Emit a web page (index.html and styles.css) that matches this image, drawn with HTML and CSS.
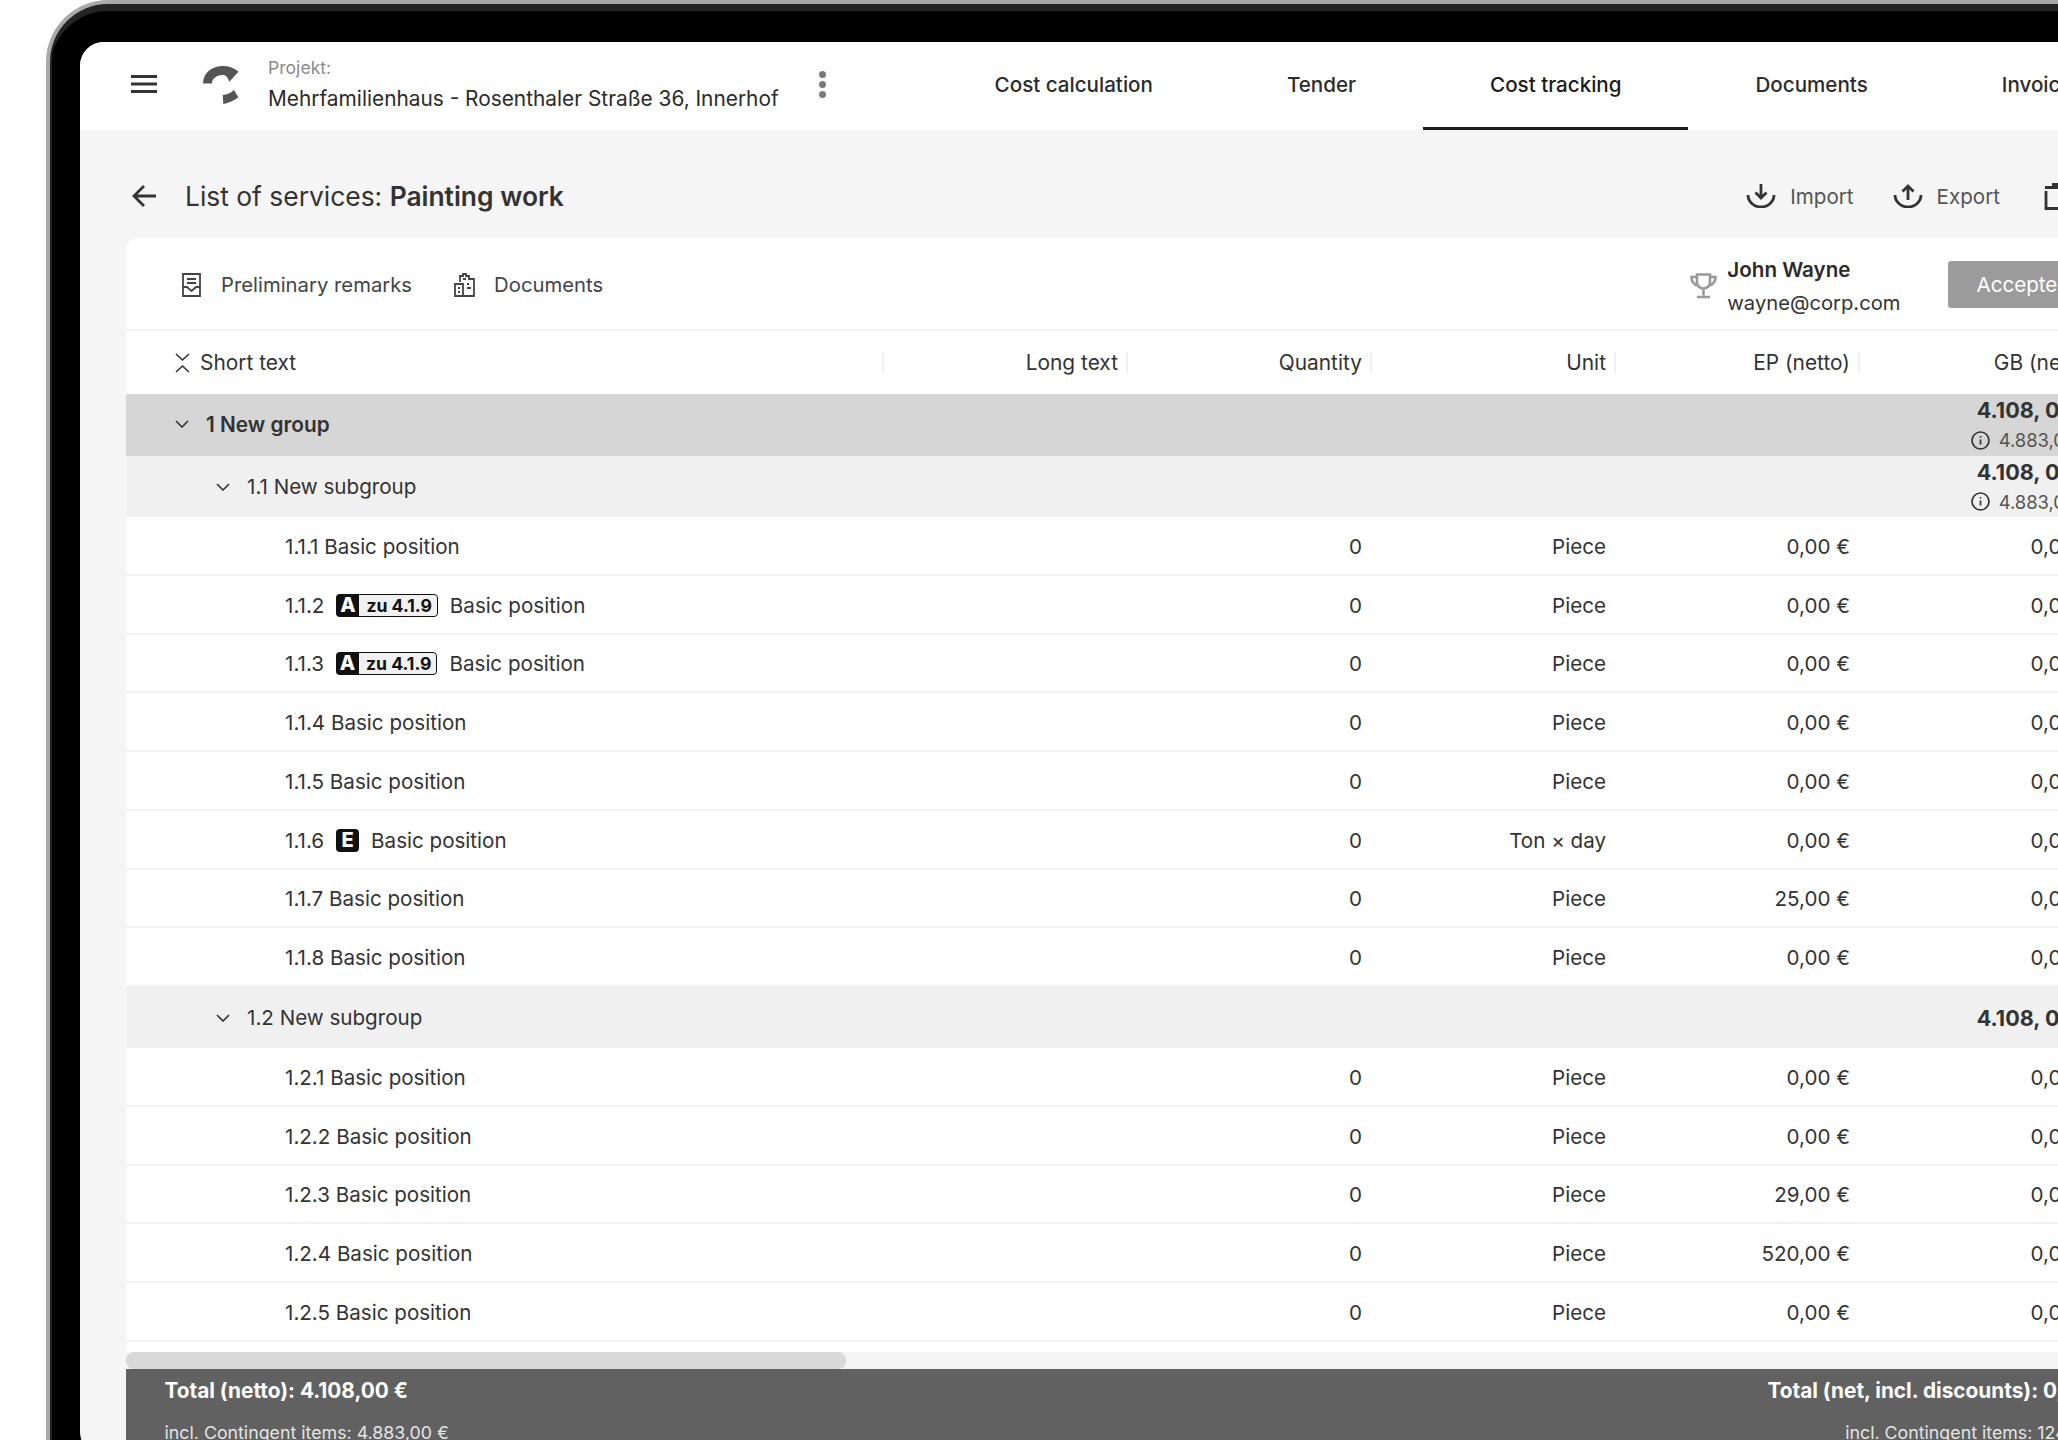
FILE: index.html
```html
<!DOCTYPE html>
<html lang="en">
<head>
    <meta charset="UTF-8">
    <meta name="viewport" content="width=device-width, initial-scale=1.0">
    <title>List of services</title>
    <link rel="stylesheet" href="styles.css">
</head>
<body>

<div class="device">
<div class="screen">

    <header class="topbar">
        <svg class="menu-icon" width="26" height="18" viewBox="0 0 26 18"><path d="M0 0h26v3H0zM0 7.500h26v3H0zM0 15h26v3H0z"/></svg>
        <svg class="logo" width="36" height="38" viewBox="0 0 36 38"><path d="M0 17.500C0 7 9 0 20 0c6 0 11.500 2 15.500 5.700L26.300 15.700C24.500 10.500 22.500 9 20 9c-6 0-11 3-11 8.500z"/><path d="M31 24l4.300 7.300C31 35 26 37 20.300 38l-.6-9c4.300-.5 8.300-2 11.300-5z"/></svg>
        <div class="project">
            <div class="project-label">Projekt:</div>
            <div class="project-name">Mehrfamilienhaus - Rosenthaler Straße 36, Innerhof</div>
        </div>
        <div class="kebab"><span></span><span></span><span></span></div>
        <nav class="tabs">
            <a class="tab">Cost calculation</a>
            <a class="tab">Tender</a>
            <a class="tab active">Cost tracking</a>
            <a class="tab">Documents</a>
            <a class="tab">Invoices</a>
        </nav>
    </header>

    <div class="toolbar">
        <svg class="back-icon" width="24" height="22" viewBox="0 0 24 22"><path d="M24 11H2M12 1L2 11l10 10"/></svg>
        <h1 class="page-title">List of services: <strong>Painting work</strong></h1>
        <div class="actions">
            <a class="action">
                <svg width="30" height="24" viewBox="0 0 30 24"><path d="M2 11a13 12 0 0 0 26 0M15 0v14M9.500 8.500L15 14l5.500-5.500"/></svg>
                Import
            </a>
            <a class="action">
                <svg width="30" height="24" viewBox="0 0 30 24"><path d="M2 11a13 12 0 0 0 26 0M15 16V2M9.500 7.500L15 2l5.500 5.500"/></svg>
                Export
            </a>
            <svg class="trash-icon" width="28" height="27" viewBox="0 0 28 27"><path d="M2 8v17.500h24V8M1 4.500h26M8 1.500h12"/></svg>
        </div>
    </div>

    <section class="card">
        <div class="subbar">
            <a class="sublink">
                <svg width="19" height="24" viewBox="0 0 19 24"><path d="M1 1h17v22H1zM5 6h9M5 10h9M1 14h4l4.500 4 4.500-4h4"/></svg>
                Preliminary remarks
            </a>
            <a class="sublink">
                <svg width="21" height="24" viewBox="0 0 21 24"><path d="M6 9V3h3V1h3v2h3v3h5v17H1V11h8v12M9 6h3M13 11h2M13 15h4M4 15h2M4 19h2"/></svg>
                Documents
            </a>
            <div class="winner">
                <svg class="trophy" width="27" height="26" viewBox="0 0 27 26"><path d="M7 1.500h13v8c0 3.500-3 6-6.500 6S7 13 7 9.500zM7 4H1.500c0 5 2 7.500 6.500 8.500M20 4h5.500c0 5-2 7.500-6.500 8.500M13.500 15.500v7M7 24h13"/></svg>
                <div>
                    <div class="winner-name">John Wayne</div>
                    <div class="winner-mail">wayne@corp.com</div>
                </div>
            </div>
            <button class="accepted">Accepted</button>
        </div>

        <div class="row head">
            <div class="cell cell-name sep">
                <svg class="collapse-icon" width="15" height="20" viewBox="0 0 15 20"><path d="M1 1l6.500 6L14 1M1 19l6.500-6 6.500 6"/></svg>
                Short text
            </div>
            <div class="cell num sep">Long text</div>
            <div class="cell num sep">Quantity</div>
            <div class="cell num sep">Unit</div>
            <div class="cell num sep">EP (netto)</div>
            <div class="cell num sep">GB (netto)</div>
        </div>

        <div class="row group">
            <div class="cell cell-name">
                <svg class="chevron" width="14" height="8" viewBox="0 0 14 8"><path d="M1 1l6 6 6-6"/></svg>
                <span class="group-label">1 New group</span>
            </div>
            <div class="cell"></div><div class="cell"></div><div class="cell"></div><div class="cell"></div>
            <div class="cell num amount">
                <div class="amount-main">4.108, 00 €</div>
                <div class="amount-sub">
                    <svg class="info-icon" width="19" height="19" viewBox="0 0 19 19"><circle cx="9.500" cy="9.500" r="8.500"/><path d="M9.500 8.500v5M9.500 5v1.500"/></svg>
                    4.883,00 €
                </div>
            </div>
        </div>

        <div class="row subgroup">
            <div class="cell cell-name">
                <svg class="chevron" width="14" height="8" viewBox="0 0 14 8"><path d="M1 1l6 6 6-6"/></svg>
                1.1 New subgroup
            </div>
            <div class="cell"></div><div class="cell"></div><div class="cell"></div><div class="cell"></div>
            <div class="cell num amount">
                <div class="amount-main">4.108, 00 €</div>
                <div class="amount-sub">
                    <svg class="info-icon" width="19" height="19" viewBox="0 0 19 19"><circle cx="9.500" cy="9.500" r="8.500"/><path d="M9.500 8.500v5M9.500 5v1.500"/></svg>
                    4.883,00 €
                </div>
            </div>
        </div>

        <div class="row item">
            <div class="cell cell-name">1.1.1 Basic position</div>
            <div class="cell"></div><div class="cell num">0</div><div class="cell num">Piece</div><div class="cell num">0,00 €</div><div class="cell num">0,00 €</div>
        </div>
        <div class="row item">
            <div class="cell cell-name">1.1.2 <span class="badge"><b class="badge-key">A</b><span class="badge-ref">zu 4.1.9</span></span> Basic position</div>
            <div class="cell"></div><div class="cell num">0</div><div class="cell num">Piece</div><div class="cell num">0,00 €</div><div class="cell num">0,00 €</div>
        </div>
        <div class="row item">
            <div class="cell cell-name">1.1.3 <span class="badge"><b class="badge-key">A</b><span class="badge-ref">zu 4.1.9</span></span> Basic position</div>
            <div class="cell"></div><div class="cell num">0</div><div class="cell num">Piece</div><div class="cell num">0,00 €</div><div class="cell num">0,00 €</div>
        </div>
        <div class="row item">
            <div class="cell cell-name">1.1.4 Basic position</div>
            <div class="cell"></div><div class="cell num">0</div><div class="cell num">Piece</div><div class="cell num">0,00 €</div><div class="cell num">0,00 €</div>
        </div>
        <div class="row item">
            <div class="cell cell-name">1.1.5 Basic position</div>
            <div class="cell"></div><div class="cell num">0</div><div class="cell num">Piece</div><div class="cell num">0,00 €</div><div class="cell num">0,00 €</div>
        </div>
        <div class="row item">
            <div class="cell cell-name">1.1.6 <span class="badge"><b class="badge-key">E</b></span> Basic position</div>
            <div class="cell"></div><div class="cell num">0</div><div class="cell num">Ton × day</div><div class="cell num">0,00 €</div><div class="cell num">0,00 €</div>
        </div>
        <div class="row item">
            <div class="cell cell-name">1.1.7 Basic position</div>
            <div class="cell"></div><div class="cell num">0</div><div class="cell num">Piece</div><div class="cell num">25,00 €</div><div class="cell num">0,00 €</div>
        </div>
        <div class="row item">
            <div class="cell cell-name">1.1.8 Basic position</div>
            <div class="cell"></div><div class="cell num">0</div><div class="cell num">Piece</div><div class="cell num">0,00 €</div><div class="cell num">0,00 €</div>
        </div>

        <div class="row subgroup">
            <div class="cell cell-name">
                <svg class="chevron" width="14" height="8" viewBox="0 0 14 8"><path d="M1 1l6 6 6-6"/></svg>
                1.2 New subgroup
            </div>
            <div class="cell"></div><div class="cell"></div><div class="cell"></div><div class="cell"></div>
            <div class="cell num amount"><div class="amount-main">4.108, 00 €</div></div>
        </div>

        <div class="row item">
            <div class="cell cell-name">1.2.1 Basic position</div>
            <div class="cell"></div><div class="cell num">0</div><div class="cell num">Piece</div><div class="cell num">0,00 €</div><div class="cell num">0,00 €</div>
        </div>
        <div class="row item">
            <div class="cell cell-name">1.2.2 Basic position</div>
            <div class="cell"></div><div class="cell num">0</div><div class="cell num">Piece</div><div class="cell num">0,00 €</div><div class="cell num">0,00 €</div>
        </div>
        <div class="row item">
            <div class="cell cell-name">1.2.3 Basic position</div>
            <div class="cell"></div><div class="cell num">0</div><div class="cell num">Piece</div><div class="cell num">29,00 €</div><div class="cell num">0,00 €</div>
        </div>
        <div class="row item">
            <div class="cell cell-name">1.2.4 Basic position</div>
            <div class="cell"></div><div class="cell num">0</div><div class="cell num">Piece</div><div class="cell num">520,00 €</div><div class="cell num">0,00 €</div>
        </div>
        <div class="row item">
            <div class="cell cell-name">1.2.5 Basic position</div>
            <div class="cell"></div><div class="cell num">0</div><div class="cell num">Piece</div><div class="cell num">0,00 €</div><div class="cell num">0,00 €</div>
        </div>

        <div class="scroll-track"><div class="scroll-thumb"></div></div>

        <footer class="totals">
            <div>
                <div class="total-main">Total (netto): 4.108,00 €</div>
                <div class="total-sub">incl. Contingent items: 4.883,00 €</div>
            </div>
            <div class="totals-right">
                <div class="total-main">Total (net, incl. discounts): 0,00 €</div>
                <div class="total-sub">incl. Contingent items: 124,00 €</div>
            </div>
        </footer>
    </section>

</div>
</div>

</body>
</html>
```

FILE: styles.css
```css
html, body {
    margin: 0;
    padding: 0;
    height: 1440px;
    overflow: hidden;
    background-color: #fff;
}
body {
    font-family: Inter, "Liberation Sans", sans-serif;
    font-size: 20.6px;
    color: #333;
}
svg {
    display: block;
    flex: none;
}

/* laptop frame */
.device {
    box-sizing: border-box;
    width: 2300px;
    height: 1560px;
    margin-left: 46px;
    padding: 38px 0 0 30px;
    background-color: #000;
    border: solid #a9a9a9;
    border-width: 4px 0 0 4px;
    border-radius: 62px 0 0 0;
    box-shadow: inset 0 7px 0 #242424, inset 2px 0 0 #242424;
}
.screen {
    width: 2115px;
    height: 1414px;
    background-color: #f5f5f5;
    border-radius: 24px;
    overflow: hidden;
}

/* top bar */
.topbar {
    display: flex;
    align-items: center;
    height: 88px;
    padding-left: 51px;
    background-color: #fff;
}
.menu-icon {
    fill: #333;
    margin-bottom: 4px;
}
.logo {
    fill: #555;
    margin: 0 0 3px 46px;
}
.project {
    margin: 2px 0 0 29px;
}
.project-label {
    font-size: 17.6px;
    color: #8a8a8a;
    line-height: 24px;
}
.project-name {
    font-size: 20.85px;
    line-height: 38px;
    color: #2b2b2b;
}
.kebab {
    display: flex;
    flex-direction: column;
    gap: 3px;
    margin: 0 0 4px 40px;
}
.kebab span {
    width: 7px;
    height: 7px;
    border-radius: 50%;
    background-color: #7a7a7a;
}
.tabs {
    display: flex;
    margin-left: 102px;
    align-self: stretch;
}
.tab {
    display: flex;
    align-items: center;
    padding: 0 67px 3px;
    font-weight: 500;
    color: #2b2b2b;
    white-space: nowrap;
}
.tab.active {
    color: #1c1c1c;
    box-shadow: inset 0 -3px 0 #1c1c1c;
}

/* page title */
.toolbar {
    display: flex;
    align-items: center;
    box-sizing: border-box;
    height: 108px;
    padding: 24px 123px 0 52px;
}
.back-icon {
    fill: none;
    stroke: #333;
    stroke-width: 2.8;
}
.page-title {
    margin: 0 0 0 29px;
    font-size: 26.4px;
    font-weight: 400;
    color: #333;
}
.page-title strong {
    font-weight: 600;
}
.actions {
    display: flex;
    align-items: center;
    margin-left: auto;
}
.action {
    display: flex;
    align-items: center;
    gap: 14px;
    margin-right: 39px;
    color: #555;
}
.action svg, .trash-icon {
    fill: none;
    stroke: #333;
    stroke-width: 2.8;
}
.trash-icon {
    margin-left: 5px;
}

/* card */
.card {
    width: 2023px;
    margin-left: 46px;
    background-color: #fff;
    border-radius: 10px 10px 0 0;
}
.subbar {
    display: flex;
    align-items: center;
    box-sizing: border-box;
    height: 93px;
    padding: 2px 51px 0 56px;
    border-bottom: 2px solid #f2f2f2;
}
.sublink {
    display: flex;
    align-items: center;
    gap: 20px;
    margin-right: 42px;
    font-size: 20.3px;
    color: #444;
}
.sublink + .sublink {
    gap: 19px;
}
.sublink svg {
    fill: none;
    stroke: #444;
    stroke-width: 1.8;
}
.winner {
    display: flex;
    align-items: center;
    gap: 10px;
    margin: 3px 0 0 auto;
}
.trophy {
    fill: none;
    stroke: #999;
    stroke-width: 2.6;
}
.winner-name {
    font-weight: 600;
    line-height: 33px;
    color: #2b2b2b;
}
.winner-mail {
    font-size: 20.2px;
    line-height: 33px;
}
.accepted {
    height: 47px;
    margin-left: 48px;
    padding: 0 28px;
    border: none;
    border-radius: 3px;
    background-color: #9b9b9b;
    color: #fff;
    font: inherit;
}

/* table */
.row {
    display: grid;
    grid-template-columns: 758px repeat(5, 244px) 45px;
    box-sizing: border-box;
}
.cell {
    display: flex;
    align-items: center;
    min-width: 0;
    white-space: nowrap;
}
.cell-name {
    grid-column: 1;
}
.num {
    justify-content: flex-end;
    padding-right: 10px;
}
.head {
    height: 63px;
    font-size: 20.9px;
}
.head .cell-name {
    gap: 10px;
    padding-left: 49px;
}
.sep {
    position: relative;
}
.sep::after {
    content: "";
    position: absolute;
    right: 0;
    top: 21px;
    height: 21px;
    width: 2px;
    background-color: #f0f0f0;
}
.collapse-icon, .chevron {
    fill: none;
    stroke: #333;
    stroke-width: 1.6;
}
.group {
    height: 62px;
    background-color: #d6d6d6;
}
.group .cell-name {
    gap: 17px;
    padding: 0 0 2px 49px;
}
.group-label {
    font-size: 20.8px;
    font-weight: 600;
}
.subgroup {
    height: 61px;
    background-color: #f0f0f0;
}
.subgroup .cell-name {
    gap: 17px;
    padding-left: 90px;
}
.item {
    height: 58.75px;
    padding-top: 2px;
    border-bottom: 2px solid #f2f2f2;
}
.item .cell-name {
    gap: 12px;
    padding-left: 159px;
}
.amount {
    flex-direction: column;
    align-items: flex-end;
    justify-content: center;
}
.amount-main {
    font-size: 21.6px;
    font-weight: 700;
    line-height: 30px;
}
.amount-sub {
    display: flex;
    align-items: center;
    gap: 9px;
    font-size: 18.4px;
    color: #555;
    line-height: 30px;
}
.info-icon {
    fill: none;
    stroke: #333;
    stroke-width: 1.7;
}

/* position badges */
.badge {
    display: inline-flex;
    align-items: stretch;
    height: 23px;
    border-radius: 4px;
    overflow: hidden;
    font-size: 17.6px;
    font-weight: 700;
    line-height: 23px;
}
.badge-key {
    width: 23px;
    background-color: #111;
    color: #fff;
    font-size: 20px;
    font-weight: 800;
    text-align: center;
}
.badge-ref {
    box-sizing: border-box;
    padding: 0 5px 0 7px;
    background-color: #f0f0f0;
    color: #111;
    border: solid #111;
    border-width: 1px 1px 1px 0;
    border-radius: 0 4px 4px 0;
    line-height: 21px;
}

/* scrollbar + totals */
.scroll-track {
    height: 17px;
    margin-top: 10px;
    background-color: #f5f5f5;
}
.scroll-thumb {
    width: 720px;
    height: 17px;
    border-radius: 8px;
    background-color: #d9d9d9;
}
.totals {
    display: flex;
    justify-content: space-between;
    height: 90px;
    padding: 8px 39px 0 38.5px;
    background-color: #616161;
    color: #fff;
}
.totals-right {
    text-align: right;
}
.total-main {
    font-size: 20.8px;
    font-weight: 700;
    line-height: 28px;
}
.total-sub {
    margin-top: 14px;
    font-size: 17.8px;
    line-height: 28px;
    color: #e4e4e4;
}
```
